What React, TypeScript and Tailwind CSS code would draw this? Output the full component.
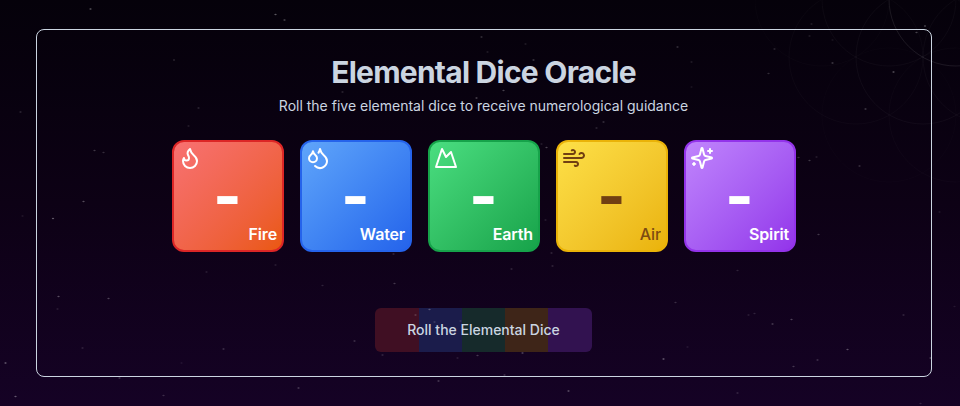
import React from "react";
import { Droplets, Mountain, Wind } from "lucide-react";

function Flame() {
  return (
    <svg width="24" height="24" viewBox="0 0 24 24" fill="none" stroke="currentColor" strokeWidth="2" strokeLinecap="round" strokeLinejoin="round">
      <path d="M8.5 14.5A2.5 2.5 0 0 0 11 12c0-1.38-.5-2-1-3-1.072-2.143-.224-4.054 2-6 .5 2.5 2 4.9 4 6.5 2 1.6 3 3.5 3 5.5a7 7 0 1 1-14 0c0-1.153.433-2.294 1-3a2.5 2.5 0 0 0 2.5 2.5z" />
    </svg>
  );
}

function Sparkles() {
  return (
    <svg width="24" height="24" viewBox="0 0 24 24" fill="none" stroke="currentColor" strokeWidth="2" strokeLinecap="round" strokeLinejoin="round">
      <path d="M9.937 15.5A2 2 0 0 0 8.5 14.063l-6.135-1.582a.5.5 0 0 1 0-.962L8.5 9.936A2 2 0 0 0 9.937 8.5l1.582-6.135a.5.5 0 0 1 .963 0L14.063 8.5A2 2 0 0 0 15.5 9.937l6.135 1.581a.5.5 0 0 1 0 .964L15.5 14.063a2 2 0 0 0-1.437 1.437l-1.582 6.135a.5.5 0 0 1-.963 0z" />
      <path d="M20 3v4M22 5h-4M4 17v2M5 18H3" />
    </svg>
  );
}

const dice = [
  { name: "Fire", Icon: Flame, tone: "from-[#f87171] to-[#ea580c] border-[#dc2626] text-white", label: "font-semibold" },
  { name: "Water", Icon: Droplets, tone: "from-[#60a5fa] to-[#2563eb] border-[#2563eb] text-white", label: "font-semibold" },
  { name: "Earth", Icon: Mountain, tone: "from-[#4ade80] to-[#16a34a] border-[#16a34a] text-white", label: "font-semibold" },
  { name: "Air", Icon: Wind, tone: "from-[#fde047] to-[#eab308] border-[#eab308] text-[#713f12]", label: "font-medium opacity-90" },
  { name: "Spirit", Icon: Sparkles, tone: "from-[#c084fc] to-[#9333ea] border-[#9333ea] text-white", label: "font-semibold" },
];

// x, y, opacity
const stars: [number, number, number][] = [
  [90, 9, 0.4], [275, 14.5, 0.4], [284, 20, 0.35], [173.5, 60, 0.2], [198, 108, 0.2], [188, 126, 0.15],
  [20, 112, 0.2], [94, 150.5, 0.25], [103, 152.5, 0.2], [83, 201.5, 0.35], [52.5, 218.5, 0.4], [22, 216, 0.12],
  [206, 272, 0.15], [275, 265, 0.15], [58, 296.5, 0.35], [108, 298.5, 0.3], [57, 309, 0.15], [82, 348, 0.18],
  [223, 349, 0.25], [181, 363, 0.1], [5, 363, 0.45], [15, 396.5, 0.4], [119, 378, 0.25], [163, 395.5, 0.2],
  [298, 388, 0.3], [393, 254, 0.2], [394, 283.5, 0.25], [511, 269, 0.2], [551, 253, 0.2], [552, 266, 0.2],
  [429, 309.5, 0.3], [415, 315, 0.25], [434, 322, 0.2], [460, 321, 0.15], [354, 341, 0.25], [382, 355, 0.2],
  [457, 358, 0.15], [477, 355.5, 0.25], [522, 353, 0.35], [504, 375, 0.25], [438, 381, 0.3], [568, 391, 0.4],
  [322, 285.5, 0.15], [663, 359, 0.45], [687, 347, 0.12], [675, 302.5, 0.2], [748, 315, 0.15],
  [754, 313.5, 0.15], [772, 324, 0.3], [791, 319.5, 0.3], [847, 349.5, 0.35], [817, 360, 0.25], [793, 366.5, 0.25],
  [903, 315, 0.2], [818, 234.5, 0.25], [737, 270.5, 0.15], [939, 212, 0.12], [954, 306.5, 0.1], [930, 358, 0.3],
  [737, 393, 0.2], [920, 403.5, 0.15], [924.5, 26, 0.35], [916, 32.5, 0.3], [832, 63, 0.3], [893, 72, 0.4],
  [865, 109, 0.3], [832, 40, 0.1], [546, 147.5, 0.3], [541, 144, 0.15], [545, 220, 0.15], [798, 157.5, 0.2],
  [809, 160.5, 0.25], [816, 157, 0.15], [859, 166, 0.25], [481, 37, 0.25], [525, 44, 0.15], [487, 52, 0.15],
  [533, 60, 0.3], [503, 90.5, 0.3], [476, 98, 0.35], [603, 122, 0.25], [596, 128, 0.2], [677, 47, 0.25],
  [691, 62, 0.15], [691, 87, 0.1], [342, 92, 0.2], [774, 49, 0.2], [768, 73.5, 0.2], [809, 36, 0.15],
  [811, 24, 0.15], [379, 240, 0.35], [388, 240, 0.35], [395, 240, 0.35], [506, 240, 0.4], [522, 240, 0.35],
];

// x, y, opacity
const rings: [number, number, number][] = [
  [956, -1, 0.09], [889, -1, 0.03], [822, -1, 0.015], [923, 57, 0.035], [856, 57, 0.025], [990, 57, 0.03],
  [889, 115, 0.012], [956, 115, 0.02],
];

export default function App() {
  return (
    <main className="relative h-[406px] w-full overflow-hidden bg-linear-to-b from-[#05010a] via-[#0d0115] to-[#150225] pt-[29px] pr-7 pl-9 font-['Inter',sans-serif]">
      <section className="flex h-[348px] flex-col items-center rounded-lg border border-[#cbd5e1] pt-6">
        <h1 className="mr-px text-3xl font-bold tracking-tight text-[#cbd5e1]">Elemental Dice Oracle</h1>
        <p className="mt-1.5 mr-px text-sm text-[#cbd5e1]">Roll the five elemental dice to receive numerological guidance</p>
        <div className="mt-6 flex gap-4">
          {dice.map(({ name, Icon, tone, label }) => (
            <div key={name} className={`flex h-28 w-28 flex-col justify-between rounded-xl border-2 bg-linear-to-br p-1 ${tone}`}>
              <Icon />
              <div className="mr-px text-center text-6xl leading-12 font-extrabold">-</div>
              <div className={`mr-px text-right text-base leading-6 tracking-[-0.01em] ${label}`}>{name}</div>
            </div>
          ))}
        </div>
        <button className="mt-14 mr-px h-11 w-[217px] rounded-md bg-[linear-gradient(90deg,#400f23_44px,#1b1c4b_44px_87px,#162a2b_87px_130px,#3e2518_130px_173px,#321250_173px)] text-sm font-medium text-[#cbd5e1]">
          Roll the Elemental Dice
        </button>
      </section>
      <svg className="pointer-events-none absolute inset-0" width="960" height="406" viewBox="0 0 960 406">
        {rings.map(([x, y, o], i) => (
          <circle key={i} cx={x} cy={y} r="67" fill="none" stroke="#fff" strokeOpacity={o} />
        ))}
        {stars.map(([x, y, o], i) => (
          <ellipse key={i} cx={x + 0.5} cy={y} rx="1.2" ry="0.8" fill="#fff" opacity={o * 0.85} />
        ))}
      </svg>
    </main>
  );
}
